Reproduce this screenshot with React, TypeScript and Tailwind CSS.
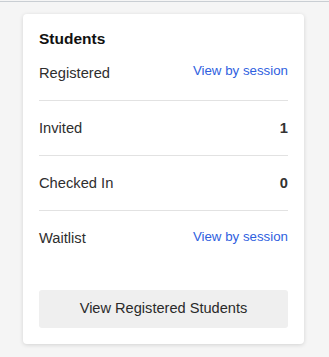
import React from 'react';

interface Row {
  label: string;
  value?: string;
  link?: string;
}

const rows: Row[] = [
  { label: 'Registered', link: 'View by session' },
  { label: 'Invited', value: '1' },
  { label: 'Checked In', value: '0' },
  { label: 'Waitlist', link: 'View by session' },
];

const App: React.FC = () => {
  return (
    <div className="min-h-[357px] w-[329px] bg-[#f5f5f5] font-['Liberation_Sans',Arial,sans-serif]">
      <div className="h-px bg-[#f5f5f5]" />
      <div className="h-px bg-[#c9ced3]" />
      <div className="ml-[23px] mt-[12px] w-[281px] rounded-[4px] bg-white px-4 pb-4 pt-[17px] shadow-[0_1px_4px_rgba(0,0,0,0.14)]">
        <h3 className="text-[15.5px] font-bold leading-[15px] text-[#111]">Students</h3>
        <div className="flex flex-col">
          {rows.map((row, i) => (
            <div
              key={row.label}
              className={`flex h-[55px] items-center justify-between ${
                i < rows.length - 1 ? 'border-b border-[#e2e2e2]' : ''
              }`}
            >
              <span className="text-[14.7px] text-[#2e2e2e]">{row.label}</span>
              {row.link ? (
                <a href="#" className="mb-1 text-[13.3px] text-[#2f5fe0]">
                  {row.link}
                </a>
              ) : (
                <span className="text-[14.7px] font-bold text-[#333]">{row.value}</span>
              )}
            </div>
          ))}
        </div>
        <button className="mt-6 flex h-[38px] w-full items-center justify-center rounded-[3px] bg-[#efefef] text-[14.6px] text-[#2a2a2a]">
          View Registered Students
        </button>
      </div>
    </div>
  );
};

export default App;
